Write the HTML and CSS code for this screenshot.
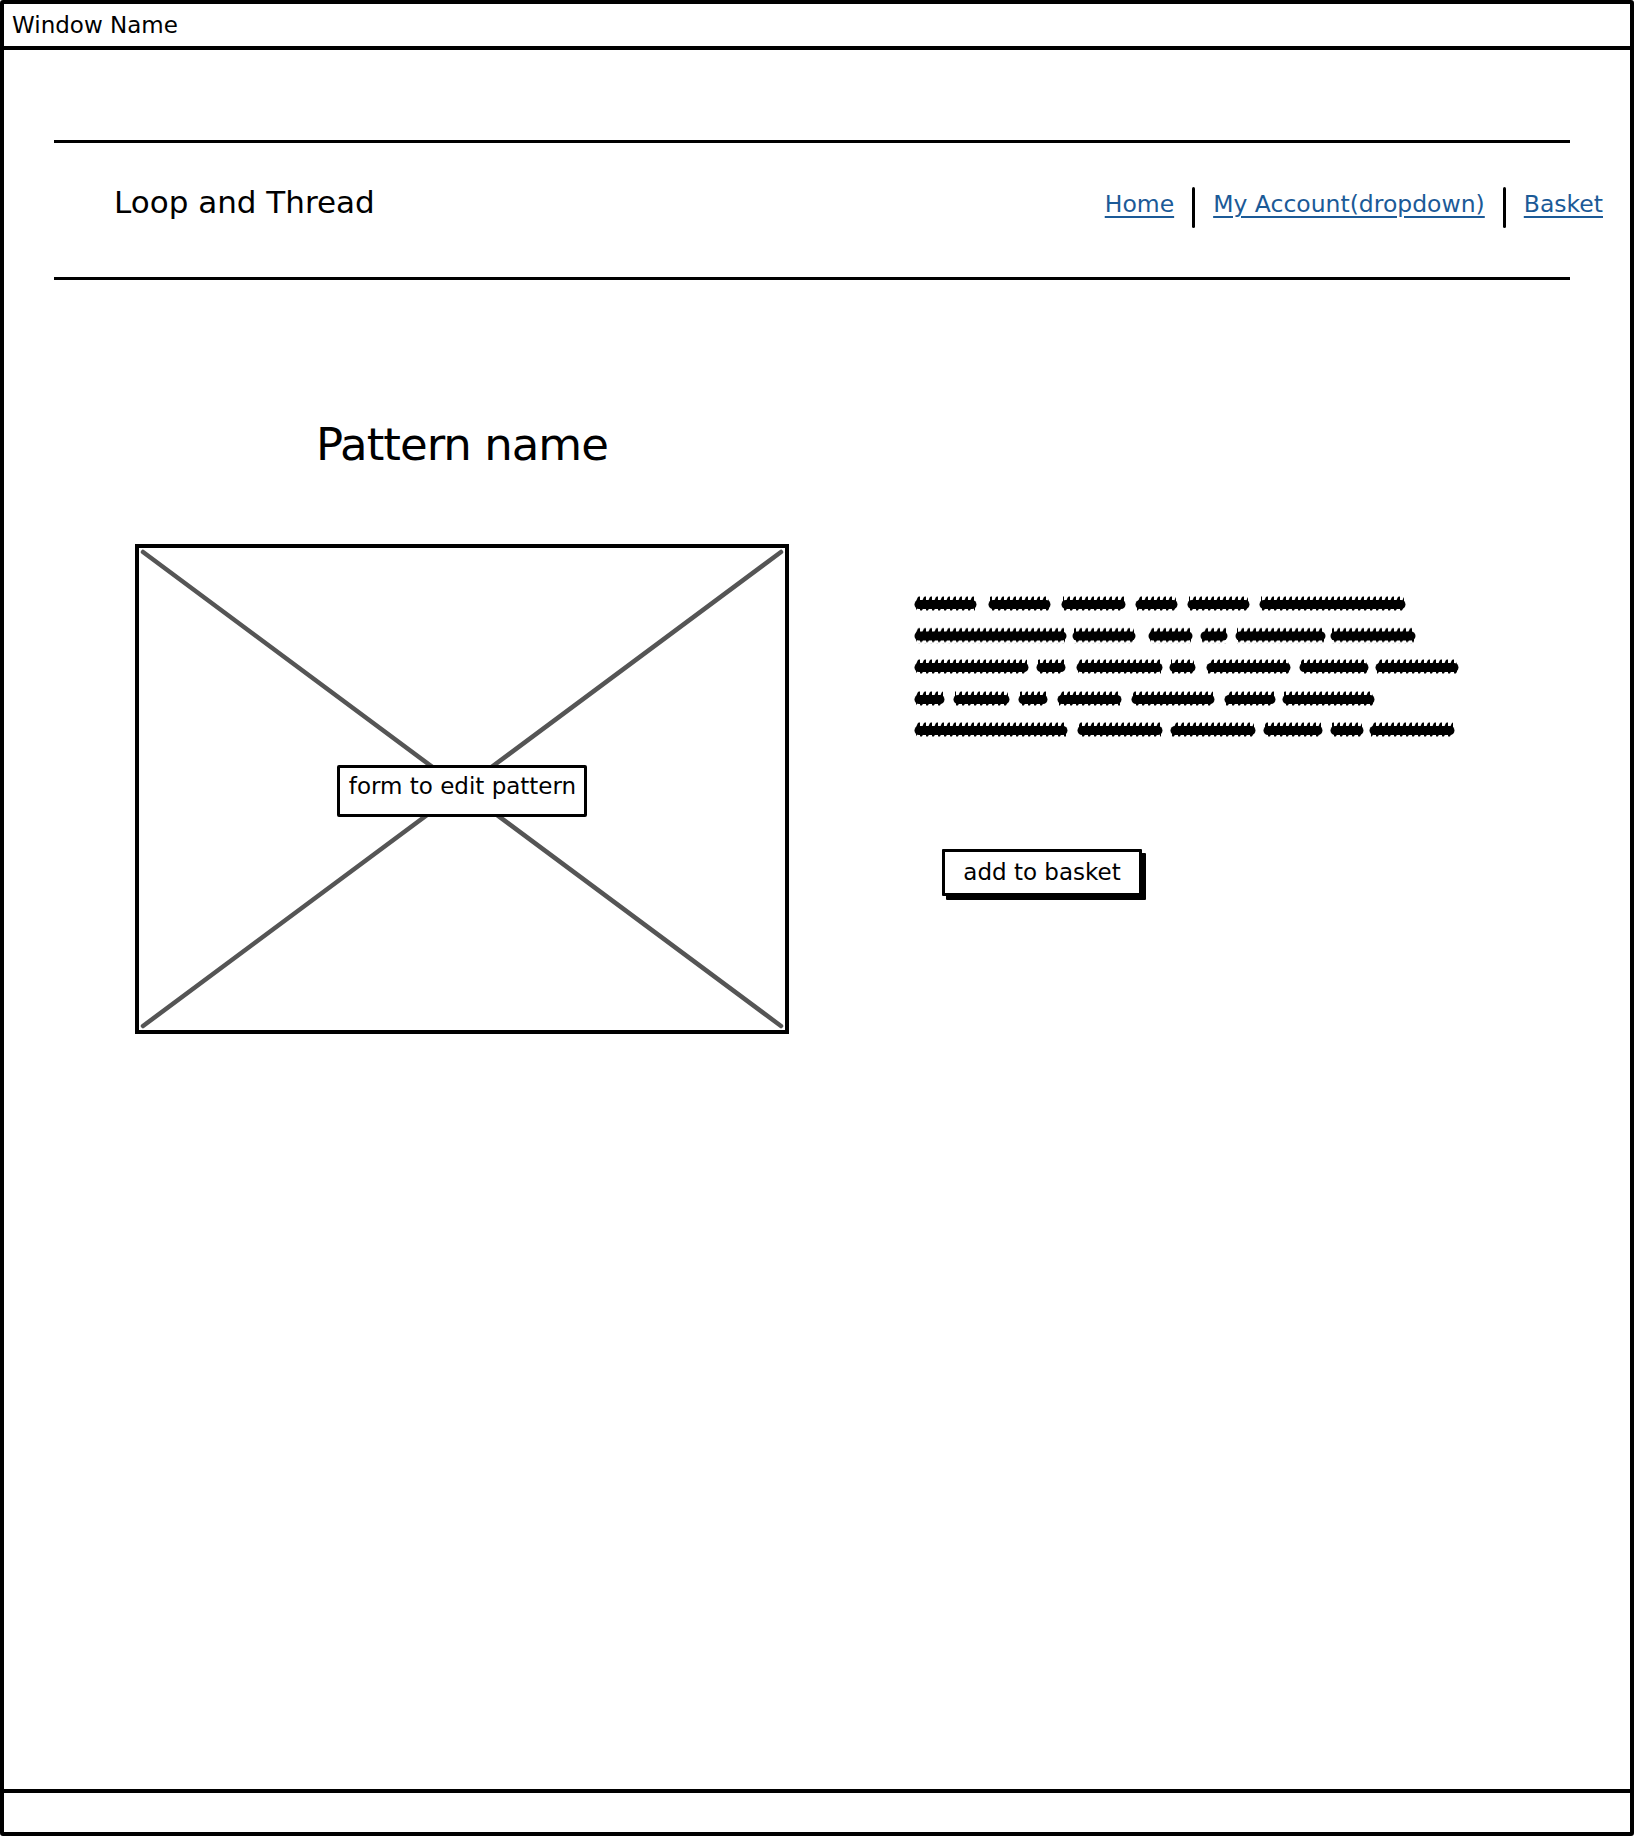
FILE: index.html
```html
<!DOCTYPE html>
<html lang="en">
<head>
<meta charset="utf-8">
<title>Window Name</title>
<link rel="stylesheet" href="styles.css">
</head>
<body>
<div class="window">
  <div class="titlebar">Window Name</div>
  <div class="content">
    <header class="masthead">
      <div class="brand">Loop and Thread</div>
      <nav class="nav">
        <a class="nav-link" href="#">Home</a>
        <span class="sep"></span>
        <a class="nav-link" href="#">My Account(dropdown)</a>
        <span class="sep"></span>
        <a class="nav-link" href="#">Basket</a>
      </nav>
    </header>

    <h1 class="title">Pattern name</h1>

    <section class="row">
      <div class="image-box">
        <svg class="cross" viewBox="0 0 646 482" preserveAspectRatio="none">
          <line x1="4" y1="4" x2="642" y2="478"/>
          <line x1="642" y1="4" x2="4" y2="478"/>
        </svg>
        <div class="overlay-label">form to edit pattern</div>
      </div>

      <div class="details">
        <svg class="scribble" width="560" height="158" viewBox="0 0 560 158">
          <defs>
            <pattern id="sq" x="0" y="-8" width="6" height="16" patternUnits="userSpaceOnUse">
              <path d="M0.8 12.6 L5.4 2.4" stroke="#000" stroke-width="3.8" stroke-linecap="round" fill="none"/>
            </pattern>
          </defs>
          <g transform="translate(0,16)">
            <line x1="5" x2="58" y1="0.5" y2="0.5"/><rect x="2" y="-8" width="59" height="16"/>
            <line x1="79" x2="132" y1="0.5" y2="0.5"/><rect x="76" y="-8" width="59" height="16"/>
            <line x1="152" x2="207" y1="0.5" y2="0.5"/><rect x="149" y="-8" width="61" height="16"/>
            <line x1="226" x2="259" y1="0.5" y2="0.5"/><rect x="223" y="-8" width="39" height="16"/>
            <line x1="278" x2="331" y1="0.5" y2="0.5"/><rect x="275" y="-8" width="59" height="16"/>
            <line x1="350" x2="487" y1="0.5" y2="0.5"/><rect x="347" y="-8" width="143" height="16"/>
          </g>
          <g transform="translate(0,47.5)">
            <line x1="5" x2="148" y1="0.5" y2="0.5"/><rect x="2" y="-8" width="149" height="16"/>
            <line x1="163" x2="217" y1="0.5" y2="0.5"/><rect x="160" y="-8" width="60" height="16"/>
            <line x1="239" x2="274" y1="0.5" y2="0.5"/><rect x="236" y="-8" width="41" height="16"/>
            <line x1="291" x2="309" y1="0.5" y2="0.5"/><rect x="288" y="-8" width="24" height="16"/>
            <line x1="326" x2="407" y1="0.5" y2="0.5"/><rect x="323" y="-8" width="87" height="16"/>
            <line x1="421" x2="497" y1="0.5" y2="0.5"/><rect x="418" y="-8" width="82" height="16"/>
          </g>
          <g transform="translate(0,79)">
            <line x1="5" x2="110" y1="0.5" y2="0.5"/><rect x="2" y="-8" width="111" height="16"/>
            <line x1="127" x2="147" y1="0.5" y2="0.5"/><rect x="124" y="-8" width="26" height="16"/>
            <line x1="167" x2="244" y1="0.5" y2="0.5"/><rect x="164" y="-8" width="83" height="16"/>
            <line x1="260" x2="277" y1="0.5" y2="0.5"/><rect x="257" y="-8" width="23" height="16"/>
            <line x1="297" x2="372" y1="0.5" y2="0.5"/><rect x="294" y="-8" width="81" height="16"/>
            <line x1="390" x2="450" y1="0.5" y2="0.5"/><rect x="387" y="-8" width="66" height="16"/>
            <line x1="466" x2="540" y1="0.5" y2="0.5"/><rect x="463" y="-8" width="80" height="16"/>
          </g>
          <g transform="translate(0,111)">
            <line x1="5" x2="26" y1="0.5" y2="0.5"/><rect x="2" y="-8" width="27" height="16"/>
            <line x1="44" x2="91" y1="0.5" y2="0.5"/><rect x="41" y="-8" width="53" height="16"/>
            <line x1="109" x2="129" y1="0.5" y2="0.5"/><rect x="106" y="-8" width="26" height="16"/>
            <line x1="148" x2="203" y1="0.5" y2="0.5"/><rect x="145" y="-8" width="61" height="16"/>
            <line x1="222" x2="296" y1="0.5" y2="0.5"/><rect x="219" y="-8" width="80" height="16"/>
            <line x1="315" x2="357" y1="0.5" y2="0.5"/><rect x="312" y="-8" width="48" height="16"/>
            <line x1="373" x2="456" y1="0.5" y2="0.5"/><rect x="370" y="-8" width="89" height="16"/>
          </g>
          <g transform="translate(0,142)">
            <line x1="5" x2="149" y1="0.5" y2="0.5"/><rect x="2" y="-8" width="150" height="16"/>
            <line x1="168" x2="244" y1="0.5" y2="0.5"/><rect x="165" y="-8" width="82" height="16"/>
            <line x1="261" x2="337" y1="0.5" y2="0.5"/><rect x="258" y="-8" width="82" height="16"/>
            <line x1="354" x2="404" y1="0.5" y2="0.5"/><rect x="351" y="-8" width="56" height="16"/>
            <line x1="421" x2="445" y1="0.5" y2="0.5"/><rect x="418" y="-8" width="30" height="16"/>
            <line x1="460" x2="536" y1="0.5" y2="0.5"/><rect x="457" y="-8" width="82" height="16"/>
          </g>
        </svg>
        <button class="btn" type="button">add to basket</button>
      </div>
    </section>
  </div>
  <div class="statusbar"></div>
</div>
</body>
</html>
```

FILE: styles.css
```css
* {
  box-sizing: border-box;
}

html, body {
  margin: 0;
  padding: 0;
  background: #ffffff;
}

body {
  font-family: "DejaVu Sans", "Liberation Sans", sans-serif;
  color: #000000;
}

.window {
  width: 1634px;
  height: 1836px;
  border: 4px solid #000000;
  border-radius: 3px;
  display: flex;
  flex-direction: column;
  background: #ffffff;
}

.titlebar {
  height: 46px;
  border-bottom: 4px solid #000000;
  padding-left: 8px;
  font-size: 23px;
  line-height: 42px;
  white-space: nowrap;
}

.content {
  flex: 1;
  display: flex;
  flex-direction: column;
  align-items: flex-start;
}

.masthead {
  align-self: stretch;
  margin: 90px 60px 0 50px;
  height: 140px;
  border-top: 3px solid #000000;
  border-bottom: 3px solid #000000;
  padding: 43px 0 0 60px;
  display: flex;
  justify-content: space-between;
  align-items: flex-start;
}

.brand {
  font-size: 31px;
  line-height: 32px;
  white-space: nowrap;
}

.nav {
  display: flex;
  align-items: flex-start;
  gap: 18px;
  margin-top: 1px;
  margin-right: -33px;
}

.nav-link {
  font-size: 23.5px;
  line-height: 34px;
  color: #1b5a97;
  text-decoration: underline;
  text-decoration-thickness: 2px;
  text-underline-offset: 4px;
  white-space: nowrap;
}

.sep {
  width: 3px;
  height: 41px;
  background: #000000;
  border-radius: 2px;
}

.title {
  margin: 142px 0 0 312px;
  font-size: 45px;
  line-height: 45px;
  font-weight: normal;
  letter-spacing: -1px;
  white-space: nowrap;
}

.row {
  margin: 77px 0 0 131px;
  display: flex;
  align-items: flex-start;
  gap: 126px;
}

.image-box {
  position: relative;
  width: 654px;
  height: 490px;
  border: 4px solid #000000;
  display: flex;
  align-items: center;
  justify-content: center;
}

.cross {
  position: absolute;
  inset: 0;
  width: 100%;
  height: 100%;
}

.cross line {
  stroke: #555555;
  stroke-width: 4.5;
  stroke-linecap: round;
}

.overlay-label {
  position: relative;
  background: #ffffff;
  border: 3px solid #000000;
  border-radius: 2px;
  padding: 0 8px 10px 9px;
  font-size: 23px;
  line-height: 36px;
  white-space: nowrap;
  margin-top: 4px;
}

.details {
  display: flex;
  flex-direction: column;
  align-items: flex-start;
  padding-top: 44px;
}

.scribble {
  display: block;
  margin-left: -1px;
}

.scribble line {
  stroke: #000000;
  stroke-width: 9;
  stroke-linecap: round;
}

.scribble rect {
  fill: url(#sq);
}

.btn {
  margin: 103px 0 0 27px;
  width: 200px;
  height: 47px;
  padding: 0 18px;
  border: 3px solid #000000;
  border-radius: 1px;
  background: #ffffff;
  box-shadow: 4px 4px 0 #000000;
  font-family: "DejaVu Sans", "Liberation Sans", sans-serif;
  font-size: 23px;
  line-height: 41px;
  color: #000000;
  white-space: nowrap;
  cursor: pointer;
}

.statusbar {
  height: 43px;
  border-top: 4px solid #000000;
}
```
